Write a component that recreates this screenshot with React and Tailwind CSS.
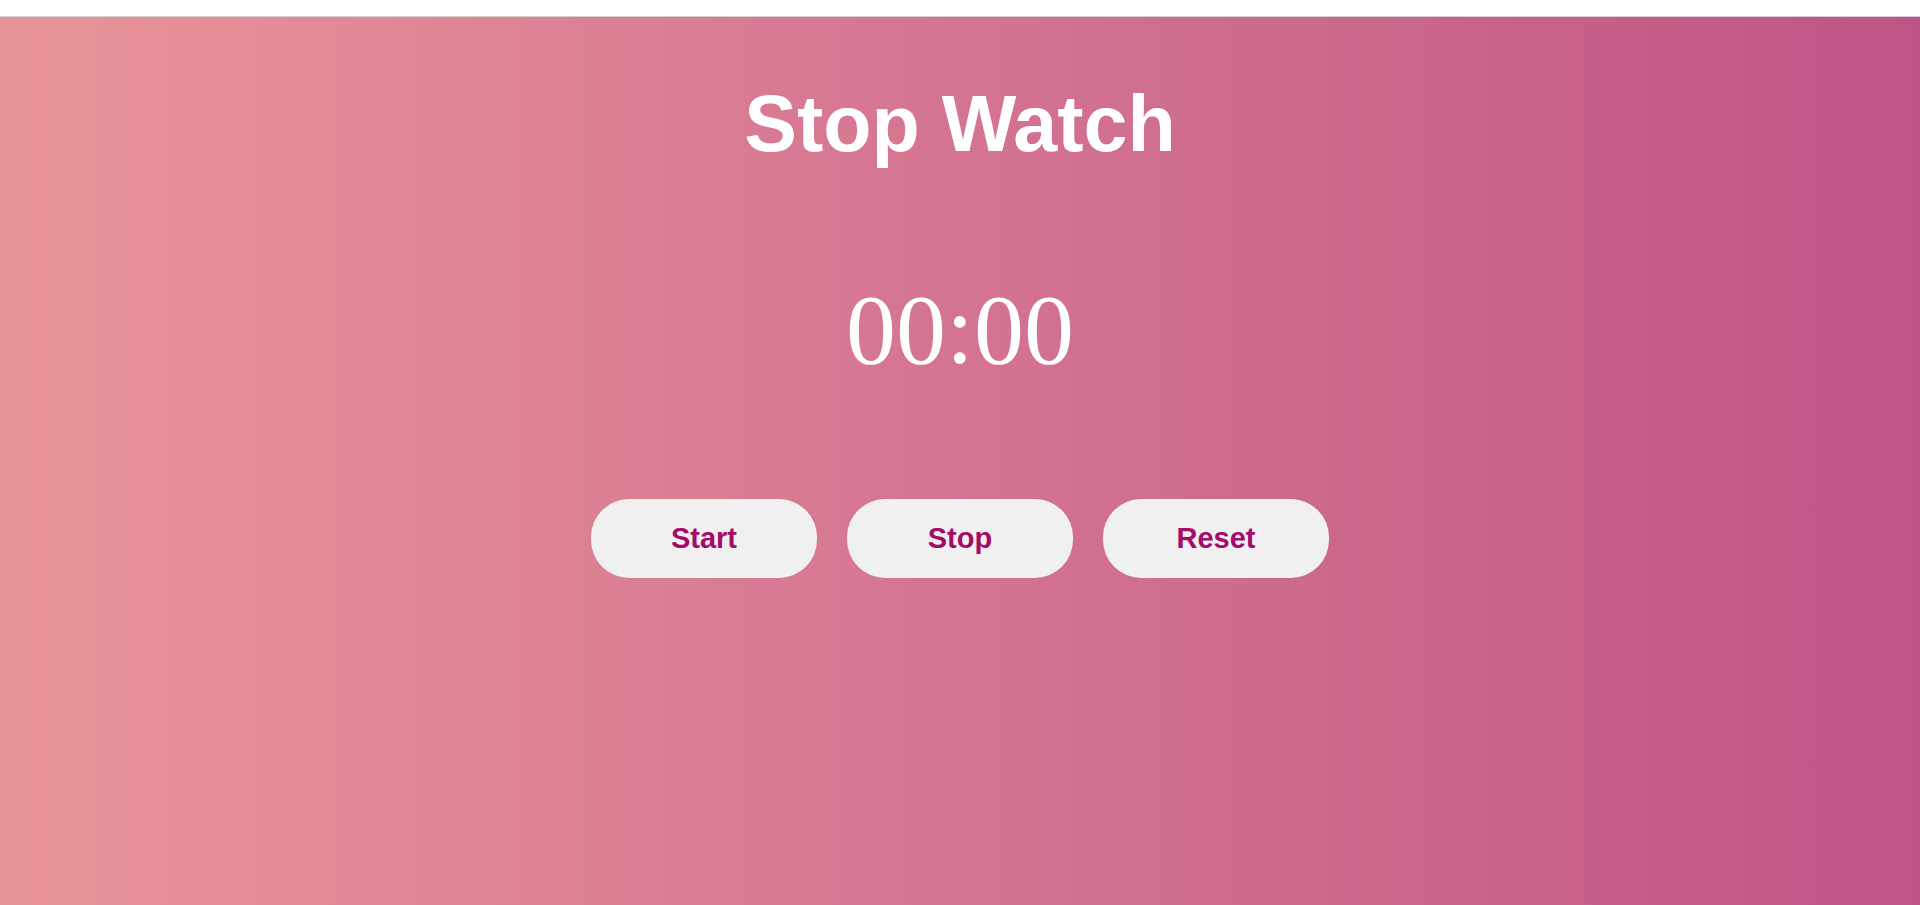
import React, { useState, useEffect, useRef } from "react";

function pad(n) {
  return String(n).padStart(2, "0");
}

export default function App() {
  const [seconds, setSeconds] = useState(0);
  const [running, setRunning] = useState(false);
  const timer = useRef(null);

  useEffect(() => {
    if (running) {
      timer.current = setInterval(() => setSeconds((s) => s + 1), 1000);
    }
    return () => clearInterval(timer.current);
  }, [running]);

  const mins = Math.floor(seconds / 60);
  const secs = seconds % 60;

  const btn =
    "w-[226px] h-[79px] rounded-[38px] bg-[#f0f0f0] text-[#a50b6a] text-[29px] font-bold font-['Liberation_Sans',Arial,sans-serif] cursor-pointer";

  return (
    <div className="min-h-screen flex flex-col">
      {/* top strip */}
      <div className="h-4 bg-white border-b border-[#d2d2d2] box-content" />

      <div className="flex-1 flex flex-col items-center min-h-[888px] bg-[linear-gradient(to_right,#e8959a,#c05486)]">
        <h1 className="mt-[67px] text-[79px] leading-none font-bold text-white font-['Liberation_Sans',Arial,sans-serif]">
          Stop Watch
        </h1>

        <div className="mt-[117px] text-[100px] leading-none text-white font-['Liberation_Serif','Times_New_Roman',serif]">
          {pad(mins)}:{pad(secs)}
        </div>

        <div className="mt-[119px] flex gap-[30px]">
          <button className={btn} onClick={() => setRunning(true)}>
            Start
          </button>
          <button className={btn} onClick={() => setRunning(false)}>
            Stop
          </button>
          <button
            className={btn}
            onClick={() => {
              setRunning(false);
              setSeconds(0);
            }}
          >
            Reset
          </button>
        </div>
      </div>
    </div>
  );
}
